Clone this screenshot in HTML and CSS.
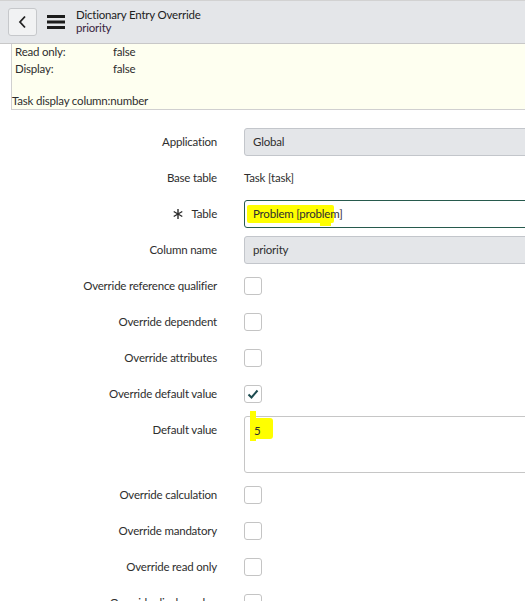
FILE: index.html
```html
<!DOCTYPE html>
<html lang="en">

<head>
    <meta charset="UTF-8">
    <meta name="viewport" content="width=device-width, initial-scale=1.0">
    <title>Dictionary Entry Override - priority</title>
    <link rel="stylesheet" href="styles.css">
</head>

<body>

    <div class="header">
        <button class="back-btn">
            <svg width="10" height="14" viewBox="0 0 10 14">
                <polyline points="7,1.5 2,7 7,12.5" fill="none" stroke="#222" stroke-width="1.8" />
            </svg>
        </button>
        <svg class="menu-icon" width="18" height="14" viewBox="0 0 18 14">
            <rect x="0" y="0" width="18" height="3" fill="#1c1c1c" />
            <rect x="0" y="5.5" width="18" height="3" fill="#1c1c1c" />
            <rect x="0" y="11" width="18" height="3" fill="#1c1c1c" />
        </svg>
        <div class="title">
            <div>Dictionary Entry Override</div>
            <div class="subtitle">priority</div>
        </div>
    </div>

    <div class="info-panel">
        <div class="info-row"><span class="info-label">Read only:</span><span>false</span></div>
        <div class="info-row"><span class="info-label">Display:</span><span>false</span></div>
        <div class="info-row"></div>
        <div class="info-row info-last">Task display column:number</div>
    </div>

    <div class="form">
        <label class="form-label">Application</label>
        <div class="field readonly">Global</div>

        <label class="form-label">Base table</label>
        <div class="field-text">Task [task]</div>

        <label class="form-label">
            <svg class="mandatory" width="10" height="10" viewBox="0 0 10 10">
                <line x1="5" y1="0" x2="5" y2="10" stroke="#2a2a2a" stroke-width="1.4" />
                <line x1="0.7" y1="2.5" x2="9.3" y2="7.5" stroke="#2a2a2a" stroke-width="1.4" />
                <line x1="0.7" y1="7.5" x2="9.3" y2="2.5" stroke="#2a2a2a" stroke-width="1.4" />
            </svg>Table
        </label>
        <div class="field active">
            <span class="marker marker-table"></span>
            <span class="marker marker-drip"></span>
            <span class="field-value">Problem [problem]</span>
        </div>

        <label class="form-label">Column name</label>
        <div class="field readonly">priority</div>

        <label class="form-label">Override reference qualifier</label>
        <div class="check-cell"><span class="checkbox"></span></div>

        <label class="form-label">Override dependent</label>
        <div class="check-cell"><span class="checkbox"></span></div>

        <label class="form-label">Override attributes</label>
        <div class="check-cell"><span class="checkbox"></span></div>

        <label class="form-label">Override default value</label>
        <div class="check-cell">
            <span class="checkbox">
                <svg width="16" height="16" viewBox="0 0 16 16">
                    <polyline points="3.5,8.5 6.5,11.5 12.5,4.5" fill="none" stroke="#1d4b50" stroke-width="2" />
                </svg>
            </span>
        </div>

        <label class="form-label label-top">Default value</label>
        <div class="textarea">
            <span class="marker marker-stub"></span>
            <span class="marker marker-five"></span>
            <span class="field-value">5</span>
        </div>

        <label class="form-label">Override calculation</label>
        <div class="check-cell"><span class="checkbox"></span></div>

        <label class="form-label">Override mandatory</label>
        <div class="check-cell"><span class="checkbox"></span></div>

        <label class="form-label">Override read only</label>
        <div class="check-cell"><span class="checkbox"></span></div>

        <label class="form-label">Override display value</label>
        <div class="check-cell"><span class="checkbox"></span></div>
    </div>

</body>

</html>
```

FILE: styles.css
```css
body {
    font-family: Lato, "Liberation Sans", sans-serif;
    font-size: 11.5px;
    letter-spacing: -0.2px;
    color: #2e2e2e;
    margin: 0;
    background: #fff;
    overflow: hidden;
}

.header {
    height: 42px;
    display: flex;
    align-items: center;
    padding-left: 8px;
    background-color: #e4e6e9;
    border-top: 1px solid #d2d2d2;
    border-bottom: 1px solid #c8c8c8;
}

.back-btn {
    width: 29px;
    height: 28px;
    display: flex;
    align-items: center;
    justify-content: center;
    padding: 0;
    background-color: #f1f2f3;
    border: 1px solid #c6c8cb;
    border-radius: 3px;
}

.menu-icon {
    margin-left: 10px;
}

.title {
    margin-left: 11px;
    line-height: 12.5px;
    margin-top: -1px;
    color: #222;
}

.subtitle {
    color: #3a2440;
}

.info-panel {
    margin-left: 11px;
    height: 65px;
    background-color: #fefff0;
    border-left: 1px solid #d0d0d0;
    border-bottom: 1px solid #d0d0d0;
}

.info-row {
    display: flex;
    height: 17px;
    line-height: 17px;
    padding-left: 3px;
}

.info-row:first-child {
    height: 16px;
    line-height: 16px;
}

.info-last {
    padding-left: 0;
    height: 15px;
    line-height: 14px;
}

.info-label {
    width: 98px;
}

.form {
    display: grid;
    grid-template-columns: 217px 300px;
    grid-auto-rows: minmax(28px, auto);
    column-gap: 27px;
    row-gap: 8px;
    margin-top: 18px;
}

.form-label {
    text-align: right;
    line-height: 28px;
    display: flex;
    align-items: center;
    justify-content: flex-end;
}

.label-top {
    align-self: start;
}

.mandatory {
    margin-right: 9px;
}

.field {
    position: relative;
    height: 26px;
    line-height: 26px;
    padding-left: 8px;
    border: 1px solid #c3c6cb;
    border-radius: 3px;
}

.readonly {
    background-color: #e4e6e9;
}

.active {
    border-color: #275a4d;
    background-color: #fff;
}

.field-text {
    line-height: 28px;
}

.field-value {
    position: relative;
}

.marker {
    position: absolute;
    background-color: #ffff00;
}

.marker-table {
    left: 2px;
    top: 4px;
    width: 87px;
    height: 18px;
    border-radius: 2px;
}

.marker-drip {
    left: 75px;
    top: 14px;
    width: 11px;
    height: 11px;
}

.textarea {
    position: relative;
    height: 49px;
    padding: 6px 9px 0;
    line-height: 16px;
    border: 1px solid #c6c6c6;
    border-radius: 3px;
}

.marker-stub {
    left: 5px;
    top: -6px;
    width: 6px;
    height: 30px;
}

.marker-five {
    left: 6px;
    top: 1px;
    width: 22px;
    height: 21px;
    border-radius: 3px;
}

.check-cell {
    display: flex;
    align-items: center;
}

.checkbox {
    width: 16px;
    height: 16px;
    display: flex;
    border: 1px solid #c4c4c4;
    border-radius: 3px;
    background: #fff;
}
```
